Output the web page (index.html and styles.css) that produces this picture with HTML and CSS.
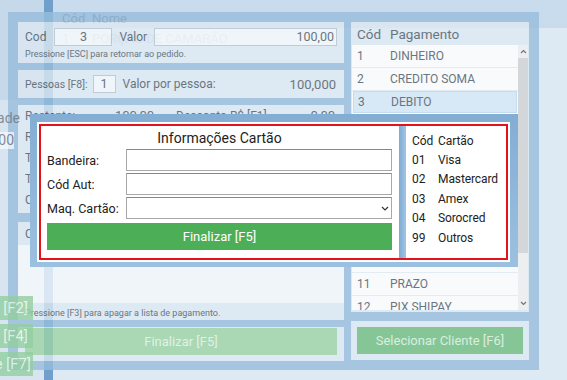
FILE: index.html
```html
<!DOCTYPE html>
<html lang="pt-BR">
<head>
    <meta charset="UTF-8">
    <meta name="viewport" content="width=device-width, initial-scale=1.0">
    <title>Pagamento - Informações Cartão</title>
    <link rel="stylesheet" href="styles.css">
</head>
<body>
<div class="screen">
    <!-- Tela do pedido (fundo) -->
    <div class="app">
        <aside class="app-side">
            <div class="side-head"></div>
            <div class="side-qty">
                <span class="qty-label">Quantidade</span>
                <span class="qty-input">1,000</span>
            </div>
            <div class="side-keys">
                <span class="key">Salvar [F2]</span>
                <span class="key">Buscar [F4]</span>
                <span class="key key-last">Cliente [F7]</span>
            </div>
        </aside>
        <div class="app-bar"></div>
        <main class="app-main">
            <div class="app-head"><span>Cód</span><span>Nome</span></div>
            <div class="app-row"><span>1</span><span>PORÇÃO DE CAMARÃO</span></div>
        </main>
    </div>

    <!-- Janela de pagamento -->
    <section class="pay">
        <div class="pay-left">
            <div class="card card-valor">
                <div class="line">
                    <span class="lbl">Cod</span>
                    <span class="field field-cod">3</span>
                    <span class="lbl lbl-valor">Valor</span>
                    <span class="field field-valor">100,00</span>
                </div>
                <p class="hint">Pressione [ESC] para retornar ao pedido.</p>
            </div>

            <div class="card card-pessoas">
                <span class="lbl lbl-small">Pessoas [F8]:</span>
                <span class="field field-pes">1</span>
                <span class="lbl lbl-valor">Valor por pessoa:</span>
                <span class="num">100,000</span>
            </div>

            <div class="card card-resumo">
                <div class="resumo-row">
                    <span class="res-lbl">Restante:</span>
                    <span class="res-val">100,00</span>
                    <span class="res-desc">Desconto R$ [F1]</span>
                    <span class="num">0,00</span>
                </div>
                <div class="resumo-row"><span class="res-lbl">Recebido:</span></div>
                <div class="resumo-row"><span class="res-lbl">Troco:</span></div>
                <div class="resumo-row"><span class="res-lbl">Taxa:</span></div>
                <div class="resumo-row"><span class="res-lbl">Crédito:</span></div>
            </div>

            <div class="card card-lista">
                <div class="lista-head">Cód Pagamento</div>
                <div class="lista-body"></div>
                <p class="hint">Pressione [F3] para apagar a lista de pagamento.</p>
            </div>

            <div class="card card-acao">
                <button class="btn btn-fin">Finalizar [F5]</button>
            </div>
        </div>

        <div class="pay-right">
            <div class="card card-formas">
                <div class="formas-head"><span>Cód</span><span>Pagamento</span></div>
                <div class="formas-body">
                    <div class="formas-list">
                        <div class="forma"><span>1</span><span>DINHEIRO</span></div>
                        <div class="forma"><span>2</span><span>CREDITO SOMA</span></div>
                        <div class="forma ativa"><span>3</span><span>DEBITO</span></div>
                        <div class="forma"><span>4</span><span>CREDITO</span></div>
                        <div class="forma"><span>5</span><span>CHEQUE</span></div>
                        <div class="forma"><span>6</span><span>VALE</span></div>
                        <div class="forma"><span>7</span><span>CONVENIO</span></div>
                        <div class="forma"><span>8</span><span>PIX</span></div>
                        <div class="forma"><span>9</span><span>BOLETO</span></div>
                        <div class="forma"><span>10</span><span>CARTEIRA</span></div>
                        <div class="forma"><span>11</span><span>PRAZO</span></div>
                        <div class="forma"><span>12</span><span>PIX SHIPAY</span></div>
                    </div>
                    <div class="scroll">
                        <span class="arrow"><svg width="7" height="5" viewBox="0 0 7 5"><polyline points="1,4 3.5,1.5 6,4" fill="none" stroke="#555" stroke-width="1.1"/></svg></span>
                        <span class="thumb"></span>
                        <span class="track"></span>
                        <span class="arrow"><svg width="7" height="5" viewBox="0 0 7 5"><polyline points="1,1 3.5,3.5 6,1" fill="none" stroke="#555" stroke-width="1.1"/></svg></span>
                    </div>
                </div>
            </div>

            <div class="card card-acao card-cli">
                <button class="btn btn-cli">Selecionar Cliente [F6]</button>
            </div>
        </div>
    </section>

    <!-- Janela Informações Cartão -->
    <div class="modal">
        <div class="modal-inner">
            <div class="modal-box">
                <form class="cartao">
                    <h2>Informações Cartão</h2>
                    <div class="campo">
                        <label for="bandeira">Bandeira:</label>
                        <input type="text" id="bandeira">
                    </div>
                    <div class="campo">
                        <label for="aut">Cód Aut:</label>
                        <input type="text" id="aut">
                    </div>
                    <div class="campo">
                        <label for="maq">Maq. Cartão:</label>
                        <div class="sel">
                            <select id="maq"><option></option></select>
                            <svg class="chevron" width="8" height="5" viewBox="0 0 8 5"><polyline points="1,1 4,4 7,1" fill="none" stroke="#333" stroke-width="1.2"/></svg>
                        </div>
                    </div>
                    <button type="button" class="btn-finalizar">Finalizar [F5]</button>
                </form>
                <div class="divisor"></div>
                <div class="bandeiras">
                    <span>Cód</span><span>Cartão</span>
                    <span>01</span><span>Visa</span>
                    <span>02</span><span>Mastercard</span>
                    <span>03</span><span>Amex</span>
                    <span>04</span><span>Sorocred</span>
                    <span>99</span><span>Outros</span>
                </div>
            </div>
        </div>
    </div>
</div>
</body>
</html>
```

FILE: styles.css
```css
/* Reset */
* {
    margin: 0;
    padding: 0;
    box-sizing: border-box;
}

body {
    width: 567px;
    height: 380px;
    overflow: hidden;
    font-family: Roboto, "Liberation Sans", sans-serif;
    background-color: #dde9f3;
    color: #333;
}

.screen {
    position: relative;
    width: 567px;
    height: 380px;
}

/* Tela do pedido, no fundo */
.app {
    display: grid;
    grid-template-columns: 44px 9px 1fr;
    height: 380px;
}

.app-side {
    display: flex;
    flex-direction: column;
    background-color: #d8e5f1;
}

.side-head {
    height: 100px;
    background-color: #c6d9ea;
}

/* partes do pedido que aparecem por cima da janela em transição */
.side-qty,
.side-keys {
    position: relative;
    z-index: 1;
    opacity: 0.8;
}

.side-qty {
    display: flex;
    flex-direction: column;
    width: 20px;
    margin-top: 10px;
}

.qty-label,
.qty-input {
    display: flex;
    justify-content: flex-end;
    overflow: hidden;
    white-space: nowrap;
    font-size: 14px;
    color: #6d7985;
}

.qty-input {
    width: 14px;
    height: 17px;
    margin-top: 6px;
    background-color: #f4f8fb;
    line-height: 17px;
}

.side-keys {
    display: flex;
    flex-direction: column;
    gap: 4px;
    margin-top: auto;
    padding-bottom: 4px;
}

.key {
    display: flex;
    justify-content: flex-end;
    align-items: center;
    width: 33px;
    height: 24px;
    padding-right: 5px;
    overflow: hidden;
    white-space: nowrap;
    font-size: 15px;
    background-color: #93cf9f;
    color: #e6f5e9;
}

.key-last {
    padding-right: 2px;
}

.app-bar {
    background-color: #6f9fca;
}

.app-head,
.app-row {
    display: grid;
    grid-template-columns: 30px 1fr;
    padding-left: 9px;
    font-size: 13px;
}

.app-head {
    height: 28px;
    padding-top: 11px;
    background-color: #c9dced;
    color: #5d6a77;
}

.app-row {
    padding-top: 3px;
    color: #b4c6d8;
}

/* Janela de pagamento */
.pay {
    position: absolute;
    left: 8px;
    top: 12px;
    width: 531px;
    height: 358px;
    padding: 10px;
    display: grid;
    grid-template-columns: 326px 178px;
    column-gap: 7px;
    background-color: #98bddc;
    color: #4f5963;
    opacity: 0.8;
}

.pay-left,
.pay-right {
    display: flex;
    flex-direction: column;
}

.pay-left {
    gap: 7px;
}

.pay-right {
    gap: 9px;
}

.card {
    background-color: #dde9f3;
}

.card-valor {
    height: 41px;
    padding: 6px 7px 0;
}

.line {
    display: flex;
    align-items: center;
}

.lbl {
    font-size: 12px;
}

.lbl-small {
    font-size: 10.5px;
}

.lbl-valor {
    margin-left: 7px;
}

.field {
    height: 18px;
    border: 1px solid #b8c5d0;
    background-color: #f5f8fb;
    font-size: 12.5px;
    line-height: 16px;
}

.field-cod {
    width: 58px;
    margin-left: 8px;
    text-align: center;
}

.field-valor {
    flex: 1;
    margin-left: 7px;
    padding-right: 2px;
    text-align: right;
}

.field-pes {
    width: 23px;
    margin-left: 5px;
    text-align: center;
}

.hint {
    margin-top: 3px;
    font-size: 9px;
}

.card-pessoas {
    display: flex;
    align-items: center;
    height: 28px;
    padding: 0 8px 0 7px;
}

.num {
    margin-left: auto;
    font-size: 13px;
}

.card-resumo {
    height: 108px;
}

.resumo-row {
    display: flex;
    align-items: center;
    height: 21px;
    padding: 0 9px 0 7px;
    font-size: 12px;
}

.res-lbl {
    width: 90px;
}

.res-val {
    font-size: 13px;
}

.res-desc {
    margin-left: 22px;
}

.card-lista {
    height: 98px;
    margin-top: 2px;
}

.lista-head {
    display: flex;
    align-items: center;
    height: 23px;
    padding-left: 7px;
    font-size: 12px;
}

.lista-body {
    height: 58px;
    background-color: #f5f9fc;
}

.card-lista .hint {
    margin-top: 5px;
    padding-left: 7px;
}

.card-acao {
    height: 34px;
    padding: 1px 7px 0;
}

.btn {
    width: 100%;
    height: 27px;
    border: none;
    font-family: inherit;
    font-size: 13px;
}

.btn-fin {
    background-color: #9ed4a6;
    color: #e0f3e3;
}

.card-cli {
    height: 39px;
    padding: 6px 6px 0;
}

.btn-cli {
    background-color: #71be80;
    color: #d6f0db;
}

/* Lista de formas de pagamento */
.card-formas {
    display: flex;
    flex-direction: column;
    height: 290px;
    padding: 0 1px 2px;
}

.formas-head {
    display: flex;
    align-items: center;
    height: 23px;
    padding-left: 5px;
    font-size: 13.5px;
}

.formas-head span:first-child,
.forma span:first-child {
    width: 33px;
}

.formas-body {
    flex: 1;
    display: flex;
    overflow: hidden;
    background-color: #fff;
}

.formas-list {
    flex: 1;
    overflow: hidden;
}

.forma {
    display: flex;
    align-items: center;
    height: 22.8px;
    padding-left: 5px;
    border-bottom: 1px solid #e6edf3;
    font-size: 12px;
}

.forma.ativa {
    margin: 0 1px;
    padding-left: 4px;
    background-color: #d6e8f9;
    border: 1px solid #c0d8ee;
}

.scroll {
    display: flex;
    flex-direction: column;
    width: 10px;
    background-color: #f0f0f0;
}

.arrow {
    display: flex;
    justify-content: center;
    align-items: center;
    height: 13px;
}

.thumb {
    height: 195px;
    background-color: #d3d3d3;
}

.track {
    flex: 1;
}

/* Janela Informações Cartão */
.modal {
    position: absolute;
    z-index: 2;
    left: 30px;
    top: 114px;
    width: 488px;
    height: 153px;
    padding: 8px 8px 5px 7px;
    background: linear-gradient(180deg, #84add4, #9cc0df);
}

.modal-inner {
    height: 100%;
    padding: 2px;
    background-color: #fff;
}

.modal-box {
    display: flex;
    height: 100%;
    border: 2px solid #e3131b;
    background-color: #fff;
}

.cartao {
    display: flex;
    flex-direction: column;
    width: 358px;
    padding: 2px 7px 0 6px;
}

.cartao h2 {
    margin-bottom: 1px;
    font-size: 14px;
    font-weight: normal;
    line-height: 20px;
    text-align: center;
    color: #222;
}

.campo {
    display: grid;
    grid-template-columns: 79px 1fr;
    align-items: center;
    height: 22px;
    margin-bottom: 2px;
}

.campo label {
    font-size: 12.5px;
    color: #222;
}

.campo input,
.campo select {
    width: 100%;
    height: 22px;
    border: 1px solid #a8a8a8;
    border-top-color: #888;
    background-color: #fff;
    font-family: inherit;
    font-size: 12.5px;
    appearance: none;
    outline: none;
}

.sel {
    position: relative;
}

.chevron {
    position: absolute;
    right: 3px;
    top: 9px;
}

.btn-finalizar {
    height: 27px;
    margin-top: 2px;
    border: none;
    background-color: #4caf57;
    color: #fff;
    font-family: inherit;
    font-size: 13px;
}

.divisor {
    width: 7px;
    background: linear-gradient(90deg, #7eaad3, #a3c5e2);
}

.bandeiras {
    flex: 1;
    display: grid;
    grid-template-columns: 26px 1fr;
    grid-auto-rows: 19.4px;
    align-items: center;
    padding: 5px 0 0 6px;
    font-size: 12px;
    letter-spacing: -0.1px;
    color: #222;
}
```
